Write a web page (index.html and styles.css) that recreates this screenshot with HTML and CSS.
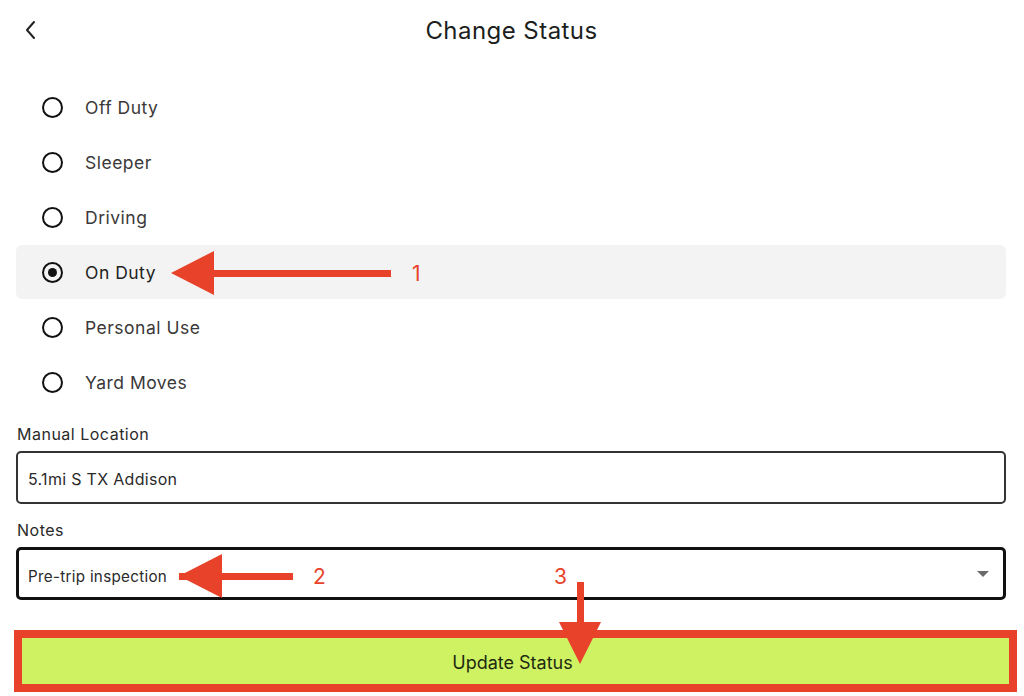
FILE: index.html
```html
<!DOCTYPE html>
<html lang="en">
<head>
<meta charset="utf-8">
<title>Change Status</title>
<link rel="stylesheet" href="styles.css">
</head>
<body>
<div class="page">
  <header class="topbar">
    <button class="back" aria-label="Back">
      <svg width="14" height="20" viewBox="0 0 14 20"><path d="M10 2 L3 10 L10 18" fill="none" stroke="#222" stroke-width="2" stroke-linecap="round" stroke-linejoin="round"/></svg>
    </button>
    <h1 class="title">Change Status</h1>
  </header>

  <ul class="status-list">
    <li class="status-row"><span class="radio"></span><span class="status-label">Off Duty</span></li>
    <li class="status-row"><span class="radio"></span><span class="status-label">Sleeper</span></li>
    <li class="status-row"><span class="radio"></span><span class="status-label">Driving</span></li>
    <li class="status-row selected"><span class="radio checked"></span><span class="status-label">On Duty</span></li>
    <li class="status-row"><span class="radio"></span><span class="status-label">Personal Use</span></li>
    <li class="status-row"><span class="radio"></span><span class="status-label">Yard Moves</span></li>
  </ul>

  <div class="field">
    <label class="field-label">Manual Location</label>
    <div class="input">5.1mi S TX Addison</div>
  </div>

  <div class="field notes">
    <label class="field-label">Notes</label>
    <div class="input select">
      <span>Pre-trip inspection</span>
      <svg class="caret" width="12" height="7" viewBox="0 0 12 7"><path d="M0 0 H12 L6 6 Z" fill="#6a6a6a"/></svg>
    </div>
  </div>

  <div class="button-frame">
    <button class="update">Update Status</button>
  </div>

  <svg class="annotations" width="1024" height="696" viewBox="0 0 1024 696">
    <g fill="#e8432a">
      <rect x="208" y="270" width="183" height="7"/>
      <polygon points="171,273 214,251 214,295"/>
      <rect x="179" y="573" width="114" height="7"/>
      <polygon points="179,576 222,554 222,598"/>
      <rect x="577" y="582" width="7" height="45"/>
      <polygon points="559,622 601,622 580,664"/>
    </g>
    <g fill="#e8432a" font-family="Inter, 'Liberation Sans', sans-serif" font-size="21">
      <text x="412" y="281">1</text>
      <text x="313" y="584">2</text>
      <text x="554" y="584">3</text>
    </g>
  </svg>
</div>
</body>
</html>
```

FILE: styles.css
```css
* { box-sizing: border-box; }
html, body { margin: 0; padding: 0; background: #fff; }
body { font-family: Inter, "Liberation Sans", sans-serif; color: #222; }

.page {
  position: relative;
  width: 1024px;
  height: 696px;
  overflow: hidden;
  display: flex;
  flex-direction: column;
}

.topbar {
  height: 60px;
  display: flex;
  align-items: center;
  justify-content: center;
  position: relative;
  flex-shrink: 0;
}
.back {
  position: absolute;
  left: 24px;
  top: 20px;
  border: 0;
  background: none;
  padding: 0;
  width: 14px;
  height: 20px;
}
.title {
  margin: 0;
  font-size: 24px;
  font-weight: 400;
  color: #1c1f1d;
  letter-spacing: 0.45px;
  padding-right: 1px;
}

.status-list {
  list-style: none;
  margin: 20px 18px 0 16px;
  padding: 0;
  display: flex;
  flex-direction: column;
}
.status-row {
  height: 55px;
  display: flex;
  align-items: center;
  padding-left: 26px;
  gap: 22px;
  border-radius: 6px;
}
.status-row.selected {
  background: #f3f3f3;
  height: 54px;
  margin-bottom: 1px;
}
.radio {
  width: 21px;
  height: 21px;
  border: 2.5px solid #111;
  border-radius: 50%;
  display: flex;
  align-items: center;
  justify-content: center;
  flex-shrink: 0;
}
.radio.checked::after {
  content: "";
  width: 9px;
  height: 9px;
  border-radius: 50%;
  background: #111;
}
.status-label {
  font-size: 17.5px;
  letter-spacing: 0.5px;
  color: #3a3838;
}
.selected .status-label { color: #222; }

.field {
  display: flex;
  flex-direction: column;
  gap: 7px;
  margin: 14px 18px 0 16px;
}
.field.notes { margin-top: 16px; }
.field-label {
  font-size: 16px;
  line-height: 20px;
  letter-spacing: 0.5px;
  color: #2a2a2a;
  padding-left: 1px;
}
.input {
  height: 53px;
  border: 2px solid #333;
  border-radius: 5px;
  display: flex;
  align-items: center;
  padding: 3px 10px 0;
  font-size: 16px;
  color: #2a2a2a;
  letter-spacing: 0.3px;
}
.input.select {
  border: 3px solid #111;
  justify-content: space-between;
  padding: 6px 14px 0 9px;
  font-size: 15.2px;
}
.caret { margin-top: -4px; }

.button-frame {
  margin: 30px 7px 0 14px;
  height: 62px;
  border: 8.5px solid #e8432a;
  background: #cff262;
}
.update {
  width: 100%;
  height: 100%;
  border: 0;
  background: #cff262;
  font-family: Inter, "Liberation Sans", sans-serif;
  font-size: 18px;
  color: #1e2a10;
  padding: 2px 6px 0 0;
}

.annotations {
  position: absolute;
  left: 0;
  top: 0;
  pointer-events: none;
}
```
